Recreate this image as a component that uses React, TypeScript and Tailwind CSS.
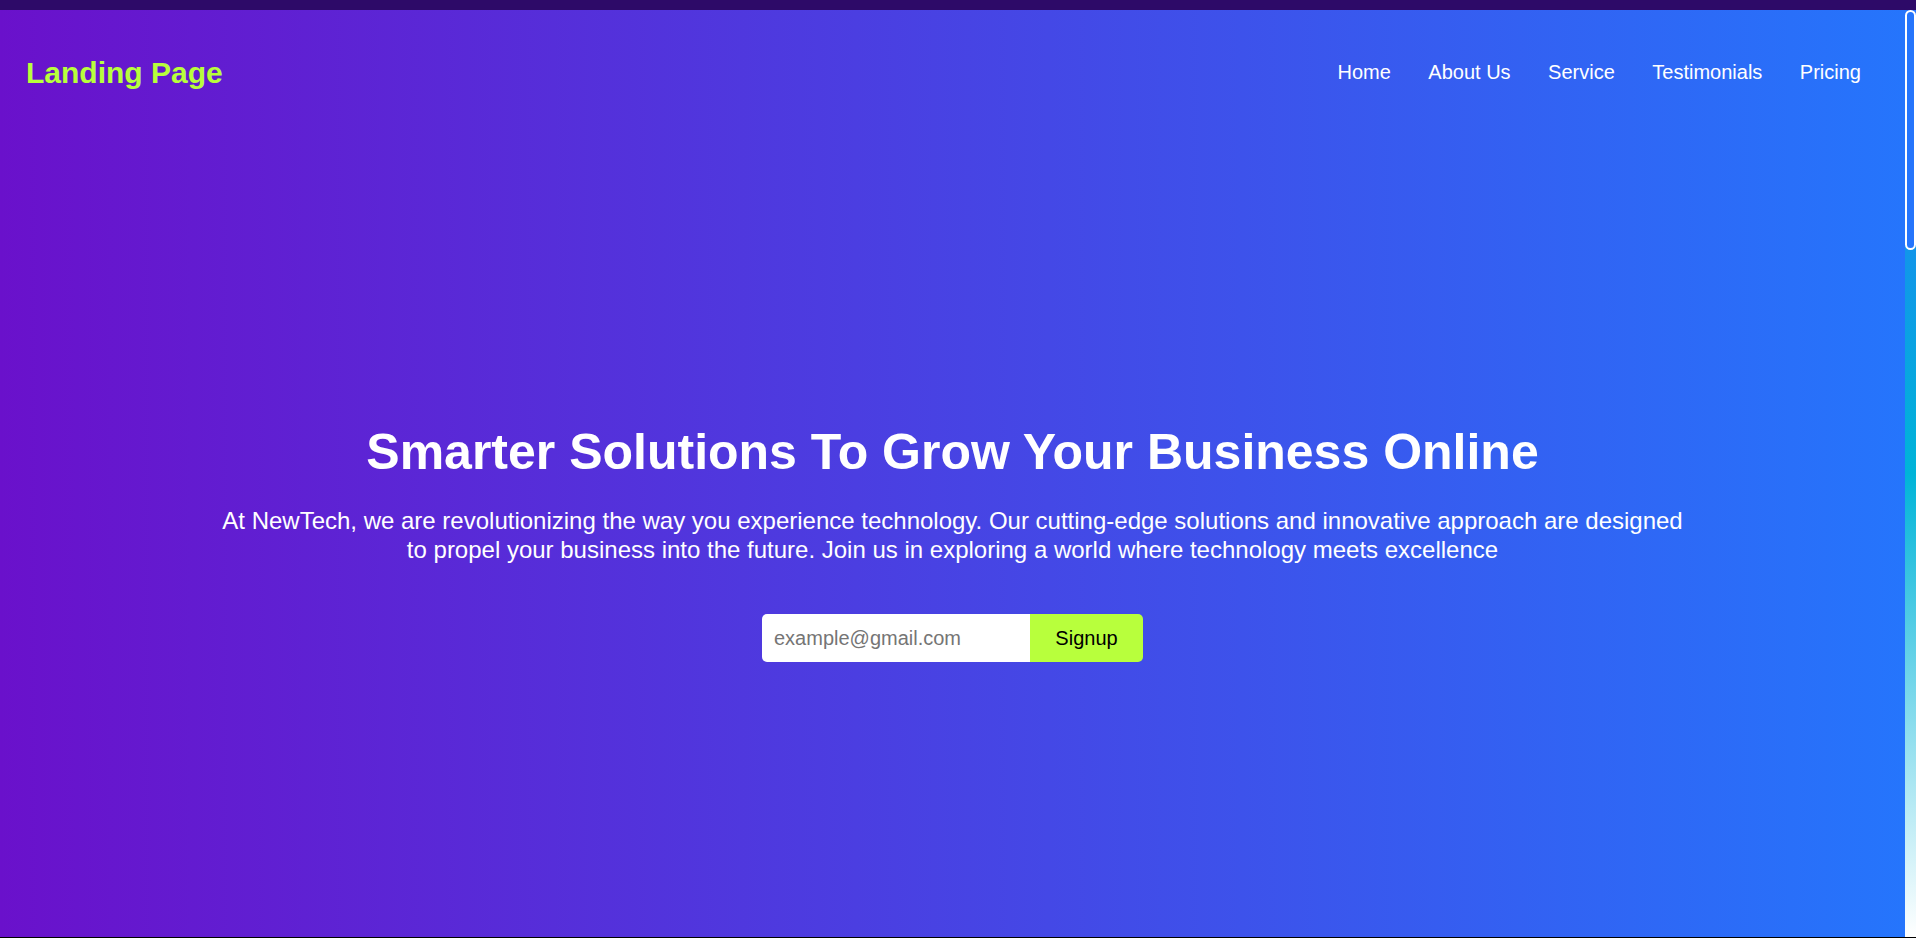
import { useState } from "react";

const navLinks = ["Home", "About Us", "Service", "Testimonials", "Pricing"];

export default function App() {
  const [email, setEmail] = useState("");

  return (
    <div className="flex h-[938px] w-full flex-col overflow-hidden bg-black font-['Liberation_Sans',Arial,sans-serif]">
      <div className="h-[10px] w-full shrink-0 bg-[#2d0a68]" />

      <div className="flex h-[927px] w-full shrink-0">
        <main className="flex flex-1 flex-col bg-[linear-gradient(to_right,#6a11cb,#2575fc)] text-white">
          <header className="flex h-[125px] shrink-0 items-center justify-between pl-[26px] pr-[44px]">
            <h1 className="text-[30px] font-bold text-[#b8ff3c]">Landing Page</h1>
            <nav className="pb-[2px]">
              <ul className="flex items-center gap-[37.5px] text-[20px]">
                {navLinks.map((link) => (
                  <li key={link}>
                    <a href="#" className="text-white">
                      {link}
                    </a>
                  </li>
                ))}
              </ul>
            </nav>
          </header>

          <section className="flex flex-1 flex-col items-center justify-center pt-[5px] text-center">
            <h2 className="text-[50px] font-bold">
              Smarter Solutions To Grow Your Business Online
            </h2>
            <p className="mt-[17px] max-w-[1475px] text-[24px] leading-[28.5px]">
              At NewTech, we are revolutionizing the way you experience
              technology. Our cutting-edge solutions and innovative approach are
              designed to propel your business into the future. Join us in
              exploring a world where technology meets excellence
            </p>

            <form
              className="mt-[50px] flex h-[48px]"
              onSubmit={(e) => e.preventDefault()}
            >
              <input
                type="email"
                value={email}
                onChange={(e) => setEmail(e.target.value)}
                placeholder="example@gmail.com"
                className="h-full w-[268px] rounded-l-[5px] bg-white px-3 text-[20px] text-black outline-none placeholder:text-[#757575]"
              />
              <button
                type="submit"
                className="h-full w-[113px] rounded-r-[5px] bg-[#b8ff3c] text-[20px] text-black"
              >
                Signup
              </button>
            </form>
          </section>
        </main>

        {/* fake scrollbar */}
        <div className="relative w-[11px] shrink-0 bg-[linear-gradient(to_bottom,#2575fc,#00b4d8,#ffffff)]">
          <div className="absolute left-0 right-0 top-0 h-[240px] rounded-[6px] border-2 border-white bg-[#2575fc]" />
        </div>
      </div>

      <div className="h-px w-full shrink-0 bg-black" />
    </div>
  );
}
